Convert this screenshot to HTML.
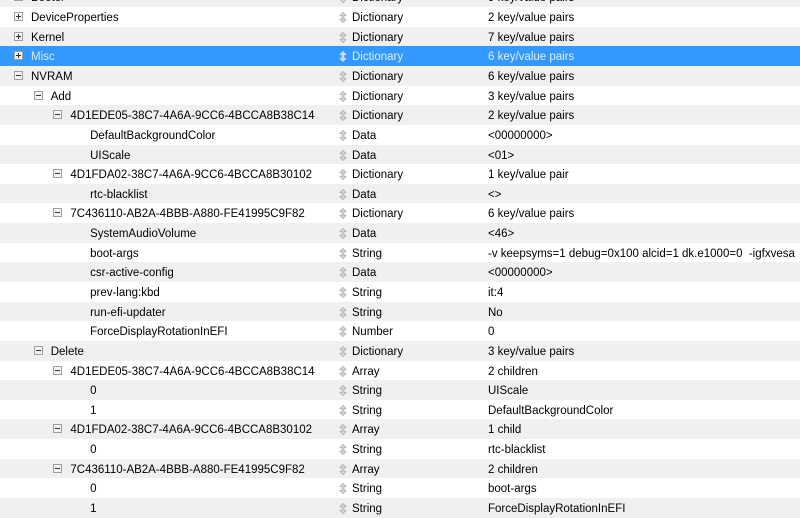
<!DOCTYPE html>
<html><head><meta charset="utf-8"><style>
body{margin:0;width:800px;height:511px;overflow:hidden;background:#fff;font-family:"Liberation Sans",sans-serif;font-size:11.5px;color:#000}
.r{position:absolute;left:0;width:800px;height:19.64px;white-space:nowrap;overflow:hidden}
.g{background:#f0f0f0}
.s{background:#3399ff;color:#dcefff}
.k,.t,.v{position:absolute;top:3px;line-height:16px}
.b,.a{position:absolute}
.t{left:352px}.v{left:488px}
.a{left:339px;top:5px}
.b{top:5px;width:7px;height:7px;border:1px solid #a0a0a0;background:#f4f4f4}
.b::before{content:"";position:absolute;left:1px;top:3px;width:5px;height:1px;background:#333}
.p::after{content:"";position:absolute;left:3px;top:1px;width:1px;height:5px;background:#333}
</style></head><body>
<div id="c"></div>
<script>
const rows=[
[0,1,'Booter','Dictionary','9 key/value pairs','p'],
[0,0,'DeviceProperties','Dictionary','2 key/value pairs','p'],
[0,1,'Kernel','Dictionary','7 key/value pairs','p'],
[0,2,'Misc','Dictionary','6 key/value pairs','p'],
[0,1,'NVRAM','Dictionary','6 key/value pairs','m'],
[1,0,'Add','Dictionary','3 key/value pairs','m'],
[2,1,'4D1EDE05-38C7-4A6A-9CC6-4BCCA8B38C14','Dictionary','2 key/value pairs','m'],
[3,0,'DefaultBackgroundColor','Data','<00000000>',''],
[3,1,'UIScale','Data','<01>',''],
[2,0,'4D1FDA02-38C7-4A6A-9CC6-4BCCA8B30102','Dictionary','1 key/value pair','m'],
[3,1,'rtc-blacklist','Data','<>',''],
[2,0,'7C436110-AB2A-4BBB-A880-FE41995C9F82','Dictionary','6 key/value pairs','m'],
[3,1,'SystemAudioVolume','Data','<46>',''],
[3,0,'boot-args','String','-v keepsyms=1 debug=0x100 alcid=1 dk.e1000=0 &nbsp;-igfxvesa',''],
[3,1,'csr-active-config','Data','<00000000>',''],
[3,0,'prev-lang:kbd','String','it:4',''],
[3,1,'run-efi-updater','String','No',''],
[3,0,'ForceDisplayRotationInEFI','Number','0',''],
[1,1,'Delete','Dictionary','3 key/value pairs','m'],
[2,0,'4D1EDE05-38C7-4A6A-9CC6-4BCCA8B38C14','Array','2 children','m'],
[3,1,'0','String','UIScale',''],
[3,0,'1','String','DefaultBackgroundColor',''],
[2,1,'4D1FDA02-38C7-4A6A-9CC6-4BCCA8B30102','Array','1 child','m'],
[3,0,'0','String','rtc-blacklist',''],
[2,1,'7C436110-AB2A-4BBB-A880-FE41995C9F82','Array','2 children','m'],
[3,0,'0','String','boot-args',''],
[3,1,'1','String','ForceDisplayRotationInEFI','']];
let h='';
rows.forEach((r,i)=>{
const top=-12.6+i*19.64;
const cls=r[1]==2?'s':(r[1]==1?'g':'');
const tx=31+r[0]*19.7;
let box=r[5]?`<span class="b ${r[5]=='p'?'p':''}" style="left:${tx-17}px"></span>`:'';
const ac=r[1]==2?'#bcdcff':'#aaa';
h+=`<div class="r ${cls}" style="top:${top}px">${box}<span class="k" style="left:${tx}px">${r[2]}</span><svg class="a" width="8" height="11" viewBox="0 0 8 11"><path d="M4 0.5L1 3.5H3V7.5H1L4 10.5L7 7.5H5V3.5H7Z" fill="#ddd" stroke="${ac}" stroke-width="0.8"/></svg><span class="t">${r[3]}</span><span class="v">${r[4].replace(/<(\w*)>/,'&lt;$1&gt;')}</span></div>`;
});
document.getElementById('c').innerHTML=h;
</script>
</body></html>
